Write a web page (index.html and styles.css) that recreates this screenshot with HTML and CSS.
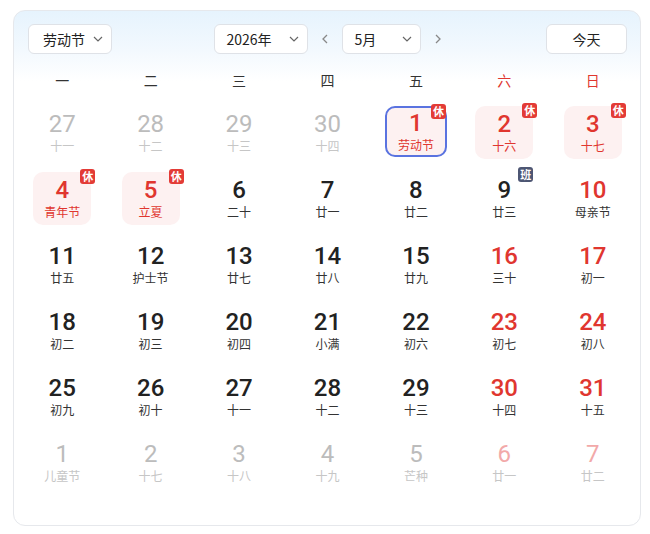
FILE: index.html
```html
<!DOCTYPE html>
<html lang="zh-CN">
<head>
<meta charset="utf-8">
<link rel="stylesheet" href="styles.css">
</head>
<body>
<div class="card">
  <div class="toolbar">
    <div class="select sel-holiday"><span>劳动节</span><svg class="chev" viewBox="0 0 10 6"><path d="M1 1l4 4 4-4"/></svg></div>
    <div class="center">
      <div class="select sel-year"><span>2026年</span><svg class="chev" viewBox="0 0 10 6"><path d="M1 1l4 4 4-4"/></svg></div>
      <div class="arrow"><svg viewBox="0 0 6 10"><path d="M5 1L1 5l4 4"/></svg></div>
      <div class="select sel-month"><span>5月</span><svg class="chev" viewBox="0 0 10 6"><path d="M1 1l4 4 4-4"/></svg></div>
      <div class="arrow"><svg viewBox="0 0 6 10"><path d="M1 1l4 4-4 4"/></svg></div>
    </div>
    <div class="today">今天</div>
  </div>
  <div class="weekdays">
    <div>一</div><div>二</div><div>三</div><div>四</div><div>五</div><div class="red">六</div><div class="red">日</div>
  </div>
  <div class="grid">
    <div class="cell other"><div class="box"><div class="num">27</div><div class="lunar">十一</div></div></div>
    <div class="cell other"><div class="box"><div class="num">28</div><div class="lunar">十二</div></div></div>
    <div class="cell other"><div class="box"><div class="num">29</div><div class="lunar">十三</div></div></div>
    <div class="cell other"><div class="box"><div class="num">30</div><div class="lunar">十四</div></div></div>
    <div class="cell rest selected"><div class="box"><div class="num">1</div><div class="lunar">劳动节</div><span class="badge">休</span></div></div>
    <div class="cell rest"><div class="box"><div class="num">2</div><div class="lunar">十六</div><span class="badge">休</span></div></div>
    <div class="cell rest"><div class="box"><div class="num">3</div><div class="lunar">十七</div><span class="badge">休</span></div></div>

    <div class="cell rest"><div class="box"><div class="num">4</div><div class="lunar">青年节</div><span class="badge">休</span></div></div>
    <div class="cell rest"><div class="box"><div class="num">5</div><div class="lunar">立夏</div><span class="badge">休</span></div></div>
    <div class="cell"><div class="box"><div class="num">6</div><div class="lunar">二十</div></div></div>
    <div class="cell"><div class="box"><div class="num">7</div><div class="lunar">廿一</div></div></div>
    <div class="cell"><div class="box"><div class="num">8</div><div class="lunar">廿二</div></div></div>
    <div class="cell"><div class="box"><div class="num">9</div><div class="lunar">廿三</div><span class="badge work">班</span></div></div>
    <div class="cell weekend"><div class="box"><div class="num">10</div><div class="lunar">母亲节</div></div></div>

    <div class="cell"><div class="box"><div class="num">11</div><div class="lunar">廿五</div></div></div>
    <div class="cell"><div class="box"><div class="num">12</div><div class="lunar">护士节</div></div></div>
    <div class="cell"><div class="box"><div class="num">13</div><div class="lunar">廿七</div></div></div>
    <div class="cell"><div class="box"><div class="num">14</div><div class="lunar">廿八</div></div></div>
    <div class="cell"><div class="box"><div class="num">15</div><div class="lunar">廿九</div></div></div>
    <div class="cell weekend"><div class="box"><div class="num">16</div><div class="lunar">三十</div></div></div>
    <div class="cell weekend"><div class="box"><div class="num">17</div><div class="lunar">初一</div></div></div>

    <div class="cell"><div class="box"><div class="num">18</div><div class="lunar">初二</div></div></div>
    <div class="cell"><div class="box"><div class="num">19</div><div class="lunar">初三</div></div></div>
    <div class="cell"><div class="box"><div class="num">20</div><div class="lunar">初四</div></div></div>
    <div class="cell"><div class="box"><div class="num">21</div><div class="lunar">小满</div></div></div>
    <div class="cell"><div class="box"><div class="num">22</div><div class="lunar">初六</div></div></div>
    <div class="cell weekend"><div class="box"><div class="num">23</div><div class="lunar">初七</div></div></div>
    <div class="cell weekend"><div class="box"><div class="num">24</div><div class="lunar">初八</div></div></div>

    <div class="cell"><div class="box"><div class="num">25</div><div class="lunar">初九</div></div></div>
    <div class="cell"><div class="box"><div class="num">26</div><div class="lunar">初十</div></div></div>
    <div class="cell"><div class="box"><div class="num">27</div><div class="lunar">十一</div></div></div>
    <div class="cell"><div class="box"><div class="num">28</div><div class="lunar">十二</div></div></div>
    <div class="cell"><div class="box"><div class="num">29</div><div class="lunar">十三</div></div></div>
    <div class="cell weekend"><div class="box"><div class="num">30</div><div class="lunar">十四</div></div></div>
    <div class="cell weekend"><div class="box"><div class="num">31</div><div class="lunar">十五</div></div></div>

    <div class="cell other"><div class="box"><div class="num">1</div><div class="lunar">儿童节</div></div></div>
    <div class="cell other"><div class="box"><div class="num">2</div><div class="lunar">十七</div></div></div>
    <div class="cell other"><div class="box"><div class="num">3</div><div class="lunar">十八</div></div></div>
    <div class="cell other"><div class="box"><div class="num">4</div><div class="lunar">十九</div></div></div>
    <div class="cell other"><div class="box"><div class="num">5</div><div class="lunar">芒种</div></div></div>
    <div class="cell other weekend"><div class="box"><div class="num">6</div><div class="lunar">廿一</div></div></div>
    <div class="cell other weekend"><div class="box"><div class="num">7</div><div class="lunar">廿二</div></div></div>
  </div>
</div>
</body>
</html>
```
FILE: styles.css
```css
* { box-sizing: border-box; }
html, body { margin: 0; padding: 0; background: #fff; }
body {
  font-family: "Noto Sans CJK SC", "Noto Sans", sans-serif;
  color: #222;
  width: 650px;
  height: 534px;
  padding: 10px 9px 0 13px;
}
.card {
  width: 628px;
  height: 516px;
  border: 1px solid #e6e8ec;
  border-radius: 12px;
  background: linear-gradient(180deg, #e6f3fd 0px, #f3f9fe 40px, #ffffff 70px);
  padding: 13px 3px 0 4px;
}
.toolbar {
  display: flex;
  justify-content: space-between;
  align-items: center;
  height: 30px;
  padding: 0 10px;
}
.select, .today {
  height: 30px;
  border: 1px solid #dfe2e7;
  border-radius: 6px;
  background: #fff;
  display: flex;
  align-items: center;
  font-size: 14px;
  color: #222;
}
.select { justify-content: space-between; padding: 0 8px 0 14px; }
.sel-holiday { width: 84px; }
.sel-year { width: 94px; padding-left: 12px; }
.sel-month { width: 79px; padding-left: 12px; }
.chev { width: 10px; height: 6px; fill: none; stroke: #666; stroke-width: 1.2; }
.center { display: flex; align-items: center; margin-left: 10px; }
.arrow { width: 34px; height: 30px; display: flex; align-items: center; justify-content: center; }
.arrow svg { width: 6px; height: 10px; fill: none; stroke: #888; stroke-width: 1.3; }
.today { width: 81px; justify-content: center; }
.weekdays {
  display: grid;
  grid-template-columns: repeat(7, 1fr);
  height: 40px;
  align-items: center;
  margin-top: 6px;
  font-size: 14px;
  color: #333;
  text-align: center;
}
.weekdays .red { color: #e0362f; }
.grid {
  display: grid;
  grid-template-columns: repeat(7, 1fr);
  grid-auto-rows: 66px;
}
.cell { display: flex; justify-content: center; padding-top: 6px; }
.box {
  position: relative;
  width: 58px;
  height: 53px;
  border-radius: 10px;
  display: flex;
  flex-direction: column;
  align-items: center;
  justify-content: center;
}
.num {
  font-family: Roboto, "Noto Sans", sans-serif;
  font-size: 24px;
  font-weight: 500;
  line-height: 25px;
  color: #222;
}
.lunar {
  font-size: 12px;
  line-height: 17px;
  color: #333;
}
.cell.weekend .num { color: #e0362f; }
.cell.rest .box { background: #fdf1f1; }
.cell.rest .num, .cell.rest .lunar { color: #e0362f; }
.cell.selected .box { border: 2px solid #5a73e0; width: 62px; height: 51px; }
.cell.other .num { color: #bcbcbc; font-weight: 400; }
.cell.other .lunar { color: #c6c6c6; }
.cell.other.weekend .num { color: #f2a9a9; }
.badge {
  position: absolute;
  top: -3px;
  right: -4px;
  width: 15px;
  height: 15px;
  border-radius: 3px;
  background: #e33b36;
  color: #fff;
  font-size: 11px;
  line-height: 15px;
  text-align: center;
  font-weight: 700;
}
.cell.selected .badge { top: -4px; right: -1px; }
.badge.work { background: #4d5673; top: -5px; right: 0px; }
```
